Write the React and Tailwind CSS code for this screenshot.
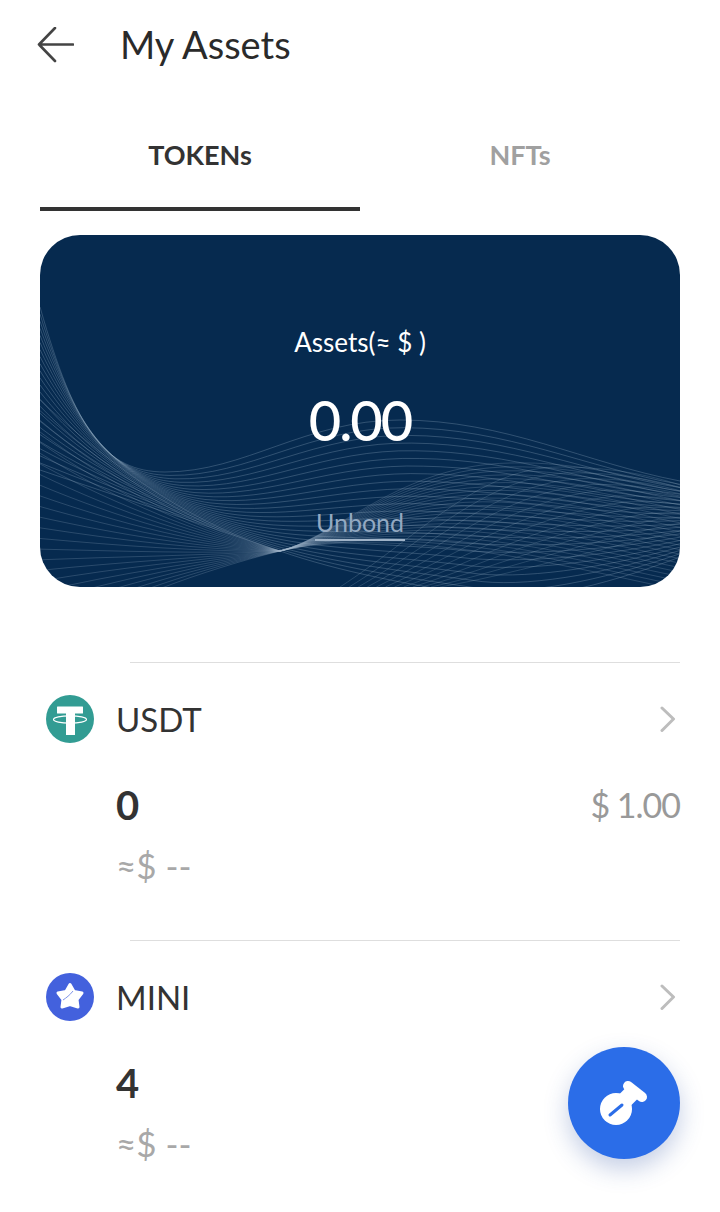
import React from "react";

const lerp = (a, b, t) => a + (b - a) * t;
function family(top, bottom, n) {
  const out = [];
  for (let i = 0; i < n; i++) {
    const t = i / (n - 1);
    const pts = top.map((p, k) => [lerp(p[0], bottom[k][0], t), lerp(p[1], bottom[k][1], t)]);
    let d = `M${pts[0][0]} ${pts[0][1]}`;
    for (let k = 1; k + 2 < pts.length; k += 3) {
      d += ` C${pts[k][0]} ${pts[k][1]} ${pts[k + 1][0]} ${pts[k + 1][1]} ${pts[k + 2][0]} ${pts[k + 2][1]}`;
    }
    out.push(d);
  }
  return out;
}

const A_TOP = [[0, 72], [35, 195], [65, 237], [125, 237], [205, 237], [265, 185], [360, 185], [465, 185], [545, 228], [640, 246]];
const A_BOT = [[0, 235], [80, 262], [170, 292], [240, 316], [300, 337], [370, 350], [450, 362], [500, 368], [580, 345], [640, 322]];
const B_TOP = [[0, 165], [80, 240], [160, 292], [240, 316], [300, 300], [360, 230], [470, 228], [540, 226], [600, 245], [640, 252]];
const B_BOT = [[0, 410], [80, 365], [160, 336], [240, 316], [290, 304], [360, 305], [450, 318], [520, 328], [590, 345], [640, 355]];
const C_TOP = [[300, 352], [380, 300], [440, 232], [520, 232], [570, 232], [610, 240], [640, 250], [650, 252], [660, 254], [670, 256]];
const C_BOT = [[400, 352], [470, 340], [540, 318], [640, 296], [650, 294], [660, 292], [670, 290], [680, 288], [690, 286], [700, 284]];

const wavesA = family(A_TOP, A_BOT, 24);
const wavesB = family(B_TOP, B_BOT, 24);
const wavesC = family(C_TOP, C_BOT, 12);

function Waves() {
  return (
    <svg className="absolute inset-0" width="640" height="352" viewBox="0 0 640 352" fill="none">
      {wavesA.map((d, i) => (
        <path key={i} d={d} stroke="#9db4c9" strokeOpacity="0.36" strokeWidth="0.8" />
      ))}
      {wavesB.map((d, i) => (
        <path key={i} d={d} stroke="#9db4c9" strokeOpacity="0.3" strokeWidth="0.8" />
      ))}
      {wavesC.map((d, i) => (
        <path key={i} d={d} stroke="#9db4c9" strokeOpacity="0.28" strokeWidth="0.8" />
      ))}
    </svg>
  );
}

function Chevron() {
  return (
    <svg width="16" height="26" viewBox="0 0 16 26" fill="none">
      <path d="M2 2 L13.5 13 L2 24.5" stroke="#bdbdbd" strokeWidth="3" strokeLinecap="round" strokeLinejoin="round" />
    </svg>
  );
}

function TetherIcon() {
  return (
    <svg width="48" height="48" viewBox="0 0 48 48">
      <circle cx="24" cy="24" r="24" fill="#329c93" />
      <rect x="11" y="11.5" width="26" height="7" rx="0.5" fill="#fff" />
      <rect x="20" y="12" width="9" height="28" fill="#fff" />
      <ellipse cx="24" cy="24.5" rx="16.5" ry="3.6" fill="none" stroke="#fff" strokeWidth="1.2" />
    </svg>
  );
}

function MiniIcon() {
  return (
    <svg width="48" height="48" viewBox="0 0 48 48">
      <circle cx="24" cy="24" r="24" fill="#4361dd" />
      <path
        d="M24 11.5 L28 18.5 L36 20 L31 26.5 L32 34 L24 31.5 L16 34 L17 26.5 L12 20 L20 18.5 Z"
        fill="#fff"
        stroke="#fff"
        strokeWidth="3"
        strokeLinejoin="round"
      />
      <path d="M17 27 C20 25 24 22 27 18" fill="none" stroke="#7f93e8" strokeWidth="1" />
    </svg>
  );
}

function Row({ icon, name, amount, price }) {
  return (
    <div className="h-[278px] flex flex-col">
      <div className="ml-[90px] h-px bg-[#dedede]" />
      <div className="mt-[32px] h-[48px] flex items-center">
        <div className="ml-[6px] w-[48px] h-[48px]">{icon}</div>
        <div className="ml-[22px] flex-1 text-[33px] leading-[48px] text-[#333333] font-['Lato',sans-serif]">{name}</div>
        <div className="mr-[4px] flex items-center"><Chevron /></div>
      </div>
      <div className="mt-[38px] h-[48px] pl-[76px] flex items-center justify-between">
        <div className="text-[40px] leading-[48px] font-bold text-[#333333] font-['Lato',sans-serif]">{amount}</div>
        <div className="text-[34px] leading-[48px] tracking-[-1px] text-[#999999] font-['Lato',sans-serif]">{price}</div>
      </div>
      <div className="mt-[14px] h-[44px] pl-[76px] text-[35px] leading-[44px] text-[#a8a8a8] font-['Lato',sans-serif]">≈$ --</div>
    </div>
  );
}

export default function App() {
  return (
    <div className="relative w-[720px] h-[1212px] overflow-hidden bg-white font-['Lato',sans-serif]">
      <header className="h-[90px] flex items-center pl-[37px]">
        <svg width="37" height="36" viewBox="0 0 37 36" fill="none">
          <path d="M36 17.5 H2 M18 1 L2 17.5 L18 34" stroke="#444444" strokeWidth="2.6" strokeLinecap="round" strokeLinejoin="round" />
        </svg>
        <h1 className="ml-[46px] pb-[2px] text-[38px] leading-[48px] text-[#2a2a2a]">My Assets</h1>
      </header>

      <div className="mx-10 flex h-[121px]">
        <div className="flex-1 flex items-center justify-center pt-[14px] border-b-4 border-[#333333] text-[27px] font-bold text-[#333333]">TOKENs</div>
        <div className="flex-1 flex items-center justify-center pt-[14px] pb-1 text-[27px] font-bold text-[#a0a0a0]">NFTs</div>
      </div>

      <section className="relative mx-10 mt-[24px] h-[352px] rounded-[40px] overflow-hidden bg-[#062a4f] flex flex-col items-center pt-[90px]">
        <Waves />
        <div className="relative h-[34px] text-[26px] leading-[34px] text-white">Assets(≈ $ )</div>
        <div className="relative mt-[30px] h-[62px] text-[56px] leading-[62px] tracking-[-2px] font-medium text-white">0.00</div>
        <div className="relative mt-[54px] w-[90px] h-[36px] border-b-2 border-[#9fb3c8] text-center text-[25px] leading-[34px] text-[#93a9c2]">Unbond</div>
      </section>

      <div className="mx-10 mt-[75px]">
        <Row icon={<TetherIcon />} name="USDT" amount="0" price="$ 1.00" />
        <Row icon={<MiniIcon />} name="MINI" amount="4" price="" />
      </div>

      <button className="absolute left-[568px] top-[1047px] w-[112px] h-[112px] rounded-full bg-[#2b6de8] shadow-[0_10px_24px_rgba(43,80,160,0.28)]">
        <svg width="112" height="112" viewBox="0 0 112 112" className="block">
          <path d="M50 60 L65 45" stroke="#fff" strokeWidth="16" />
          <path d="M60 39 L74 50" stroke="#fff" strokeWidth="10" strokeLinecap="round" />
          <circle cx="48" cy="62" r="16" fill="#fff" />
          <path d="M42 68 L54 58" stroke="#2b6de8" strokeWidth="3" strokeLinecap="round" />
        </svg>
      </button>
    </div>
  );
}
